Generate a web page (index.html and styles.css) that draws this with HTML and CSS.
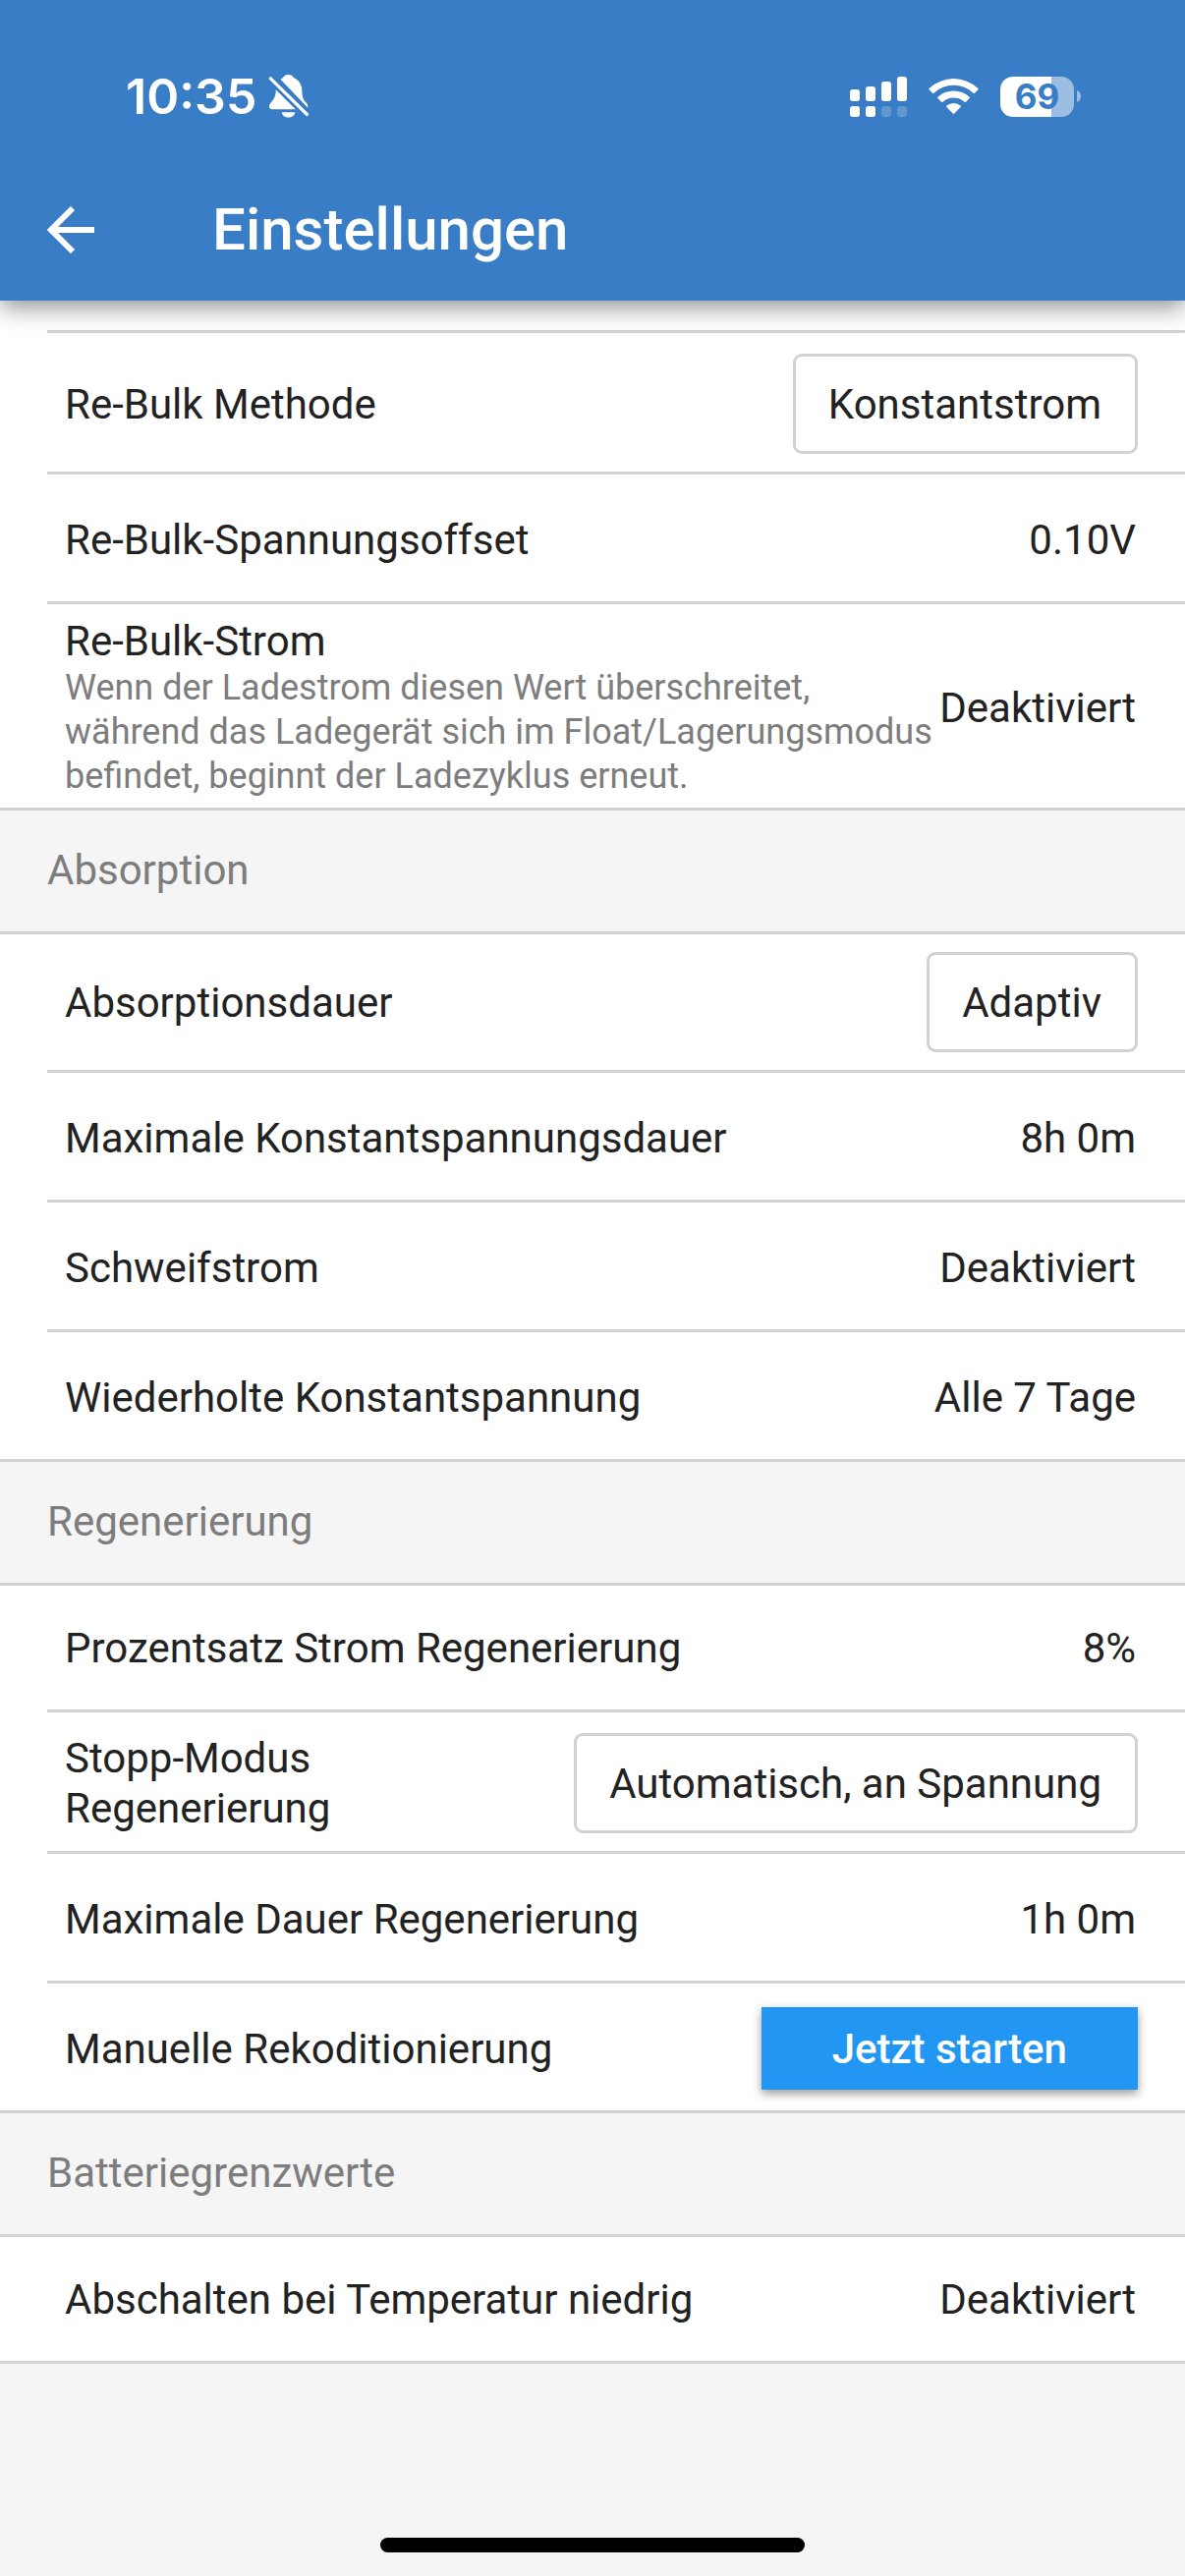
FILE: index.html
```html
<!DOCTYPE html>
<html lang="de">
<head>
<meta charset="utf-8">
<meta name="viewport" content="width=device-width, initial-scale=1">
<title>Einstellungen</title>
<link rel="stylesheet" href="styles.css">
</head>
<body>
<header class="top">
  <div class="status">
    <span class="time">10:35</span>
    <svg class="bell" width="42" height="44" viewBox="0 0 42 44" fill="#fff" aria-hidden="true">
      <path d="M12.500 4.800C13.800 4.200 14.800 3.400 15.600 2.200C17 .400 18.700 0 20.500 0C23 0 25 1.200 26 3.300C31 5.300 34 9.800 34.300 15.500C34.500 22 35.200 25.500 38.500 28.500C40 30 40.500 31.300 40.300 33.800Z"/>
      <path d="M7.800 15.200L27.800 35.200H4C1.500 35.200 .600 33.500 1 31.500C1.400 29.500 2.500 28.700 3.800 27C6.800 23.300 7.600 20.500 7.800 15.200Z"/>
      <path d="M13.800 38.300H27.200C26.800 41.600 24 43.600 20.500 43.600C17 43.600 14.200 41.600 13.800 38.300Z"/>
      <path d="M2.300 3.800L39.500 40.500" stroke="#387dc5" stroke-width="7" stroke-linecap="round"/>
      <path d="M2.300 3.800L39.500 40.500" stroke="#fff" stroke-width="3.200" stroke-linecap="round"/>
    </svg>
    <svg class="signal" width="58" height="41" viewBox="0 0 58 41" fill="#fff" aria-hidden="true">
      <rect x="0" y="13" width="10" height="12" rx="3"/>
      <rect x="16" y="10" width="10" height="15" rx="3"/>
      <rect x="32" y="5" width="10" height="20" rx="3"/>
      <rect x="48" y="0" width="10" height="25" rx="3"/>
      <rect x="0" y="30" width="10" height="11" rx="3"/>
      <rect x="16" y="30" width="10" height="11" rx="3"/>
      <rect x="32" y="30" width="10" height="11" rx="3" opacity=".2"/>
      <rect x="48" y="30" width="10" height="11" rx="3" opacity=".2"/>
    </svg>
    <svg class="wifi" width="51" height="38" viewBox="0 0 51 38" fill="#fff" aria-hidden="true">
      <path d="M.600 10.900A36.500 36.500 0 0 1 50.400 10.900Q51 11.600 50.400 12.300L47 15.700Q46.300 16.300 45.600 15.700A29.500 29.500 0 0 0 5.400 15.700Q4.700 16.300 4 15.700L.600 12.300Q0 11.600 .600 10.900Z"/>
      <path d="M9.400 19.700A24 24 0 0 1 41.600 19.700Q42.300 20.400 41.600 21.100L38 24.700Q37.300 25.300 36.600 24.700A16.500 16.500 0 0 0 14.400 24.700Q13.700 25.300 13 24.700L9.400 21.100Q8.700 20.400 9.400 19.700Z"/>
      <path d="M18.400 28.600A11 11 0 0 1 32.600 28.600Q33.300 29.300 32.600 30L26.300 36.500Q25.500 37.200 24.700 36.500L18.400 30Q17.700 29.300 18.400 28.600Z"/>
    </svg>
    <div class="battery">
      <span class="level">69</span>
      <svg width="4" height="12" viewBox="0 0 4 12" fill="#9dbee2" aria-hidden="true"><path d="M0 0Q4 1.500 4 6T0 12Z"/></svg>
    </div>
  </div>
  <div class="appbar">
    <button class="back" type="button" aria-label="Zurück">
      <svg width="48" height="48" viewBox="0 0 48 48" fill="none" stroke="#fff" stroke-width="6" aria-hidden="true"><path d="M48 24H6M26 2L4 24L26 46"/></svg>
    </button>
    <h1 class="title">Einstellungen</h1>
  </div>
</header>

<main class="settings">
  <ul class="group continued">
    <li class="row"><span class="label" id="l1">Re-Bulk Methode</span><button class="choice" type="button" aria-describedby="l1">Konstantstrom</button></li>
    <li class="row"><span class="label">Re-Bulk-Spannungsoffset</span><span class="value">0.10V</span></li>
    <li class="row"><div class="label">Re-Bulk-Strom<p class="hint">Wenn der Ladestrom diesen Wert überschreitet, während das Ladegerät sich im Float/Lagerungsmodus befindet, beginnt der Ladezyklus erneut.</p></div><span class="value">Deaktiviert</span></li>
  </ul>

  <h2 class="section">Absorption</h2>
  <ul class="group">
    <li class="row"><span class="label" id="l2">Absorptionsdauer</span><button class="choice" type="button" aria-describedby="l2">Adaptiv</button></li>
    <li class="row"><span class="label">Maximale Konstantspannungsdauer</span><span class="value">8h 0m</span></li>
    <li class="row"><span class="label">Schweifstrom</span><span class="value">Deaktiviert</span></li>
    <li class="row"><span class="label">Wiederholte Konstantspannung</span><span class="value">Alle 7 Tage</span></li>
  </ul>

  <h2 class="section">Regenerierung</h2>
  <ul class="group">
    <li class="row"><span class="label">Prozentsatz Strom Regenerierung</span><span class="value">8%</span></li>
    <li class="row"><span class="label" id="l3">Stopp-Modus Regenerierung</span><button class="choice" type="button" aria-describedby="l3">Automatisch, an Spannung</button></li>
    <li class="row"><span class="label">Maximale Dauer Regenerierung</span><span class="value">1h 0m</span></li>
    <li class="row"><span class="label" id="l4">Manuelle Rekoditionierung</span><button class="action" type="button" aria-describedby="l4">Jetzt starten</button></li>
  </ul>

  <h2 class="section">Batteriegrenzwerte</h2>
  <ul class="group last">
    <li class="row"><span class="label">Abschalten bei Temperatur niedrig</span><span class="value">Deaktiviert</span></li>
  </ul>
</main>

<footer class="home"><div class="indicator"></div></footer>
</body>
</html>
```
FILE: styles.css
```css
:root {
  --blue: #387dc5;
  --line: #d2d2d2;
  --grey: #f5f5f5;
  --text: #222;
  --muted: #7d7d7d;
}

* { box-sizing: border-box; }

body {
  margin: 0;
  min-height: 100vh;
  display: flex;
  flex-direction: column;
  background: var(--grey);
  color: var(--text);
  font: 400 42px/51px Roboto, "Liberation Sans", sans-serif;
}

button {
  font: inherit;
  color: inherit;
  border: 0;
  background: none;
  cursor: pointer;
}

/* Header */
.top {
  position: relative;
  padding-top: 62px;
  background: var(--blue);
  color: #fff;
  box-shadow: 0 6px 24px rgba(0, 0, 0, .46);
}

.status {
  display: flex;
  align-items: center;
  height: 72px;
  padding: 0 106px 0 128px;
}

.time {
  font: 600 50px/60px Inter, "Liberation Sans", sans-serif;
}

.bell { margin-left: 12px; }
.signal { margin-left: auto; }
.wifi { margin-left: 22px; }

.battery {
  display: flex;
  align-items: center;
  gap: 3px;
  margin-left: 22px;
}

.level {
  width: 75px;
  border-radius: 13px;
  background: linear-gradient(90deg, #fff 69%, #9dbee2 69%);
  color: var(--blue);
  font: 700 35px/41px Inter, "Liberation Sans", sans-serif;
  text-align: center;
}

.appbar {
  display: flex;
  align-items: center;
  height: 144px;
  margin-top: 28px;
  padding: 0 48px;
}

.back {
  display: flex;
  padding: 0;
}

.title {
  margin: 0 0 0 120px;
  font-size: 60px;
  font-weight: 500;
  line-height: 72px;
}

/* Settings list */
.group {
  margin: 0;
  padding: 0 0 0 48px;
  list-style: none;
  background: #fff;
}

.continued { padding-top: 30px; }
.last { border-bottom: 3px solid var(--line); }

.row {
  display: flex;
  align-items: center;
  gap: 6px;
  min-height: 126px;
  padding: 9px 48px 9px 18px;
}

.row + .row,
.continued .row {
  min-height: 132px;
  padding-top: 12px;
  border-top: 3px solid var(--line);
}

.label { flex: 1; }

.value {
  padding-right: 2px;
  white-space: nowrap;
}

.hint {
  margin: 0;
  color: var(--muted);
  font-size: 36px;
  line-height: 45px;
}

.section {
  margin: 0;
  padding: 37px 48px 38px;
  border: solid var(--line);
  border-width: 3px 0;
  color: var(--muted);
  font-size: 42px;
  font-weight: 400;
  line-height: 48px;
}

.choice {
  height: 102px;
  margin: 9px 0;
  padding: 0 34px 0 33px;
  border: 3px solid var(--line);
  border-radius: 9px;
  white-space: nowrap;
}

.action {
  height: 84px;
  padding: 0 72px;
  background: #2196f3;
  color: #fff;
  font-weight: 500;
  white-space: nowrap;
  box-shadow: 0 4px 9px rgba(0, 0, 0, .4);
}

/* Home indicator */
.home {
  display: flex;
  justify-content: center;
  margin-top: auto;
  padding: 48px 0 24px;
}

.indicator {
  width: 432px;
  height: 15px;
  border-radius: 8px;
  background: #000;
}
```
